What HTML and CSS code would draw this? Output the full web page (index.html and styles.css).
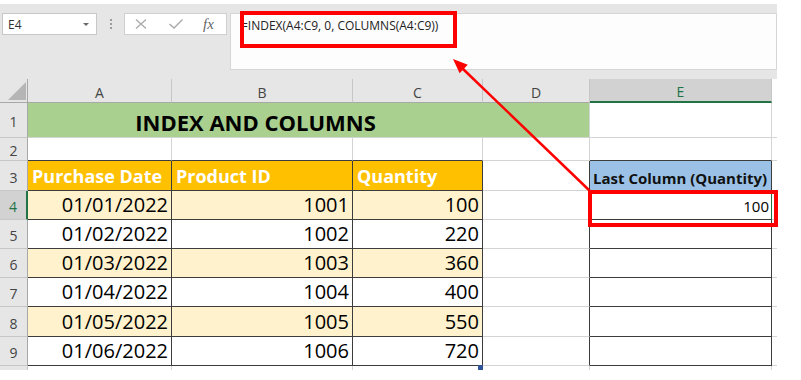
FILE: index.html
```html
<!DOCTYPE html>
<html lang="en">
<head>
    <meta charset="UTF-8">
    <title>INDEX and COLUMNS</title>
    <link rel="stylesheet" href="styles.css">
</head>
<body>
    <div class="app">
        <div class="toolbar">
            <div class="namebox"><span>E4</span><i class="caret"></i></div>
            <div class="grip"><i></i><i></i><i></i></div>
            <div class="fbtns">
                <svg width="12" height="10" viewBox="0 0 12 10"><path d="M1 0.5 L11 9.5 M11 0.5 L1 9.5" stroke="#a9a9a9" stroke-width="1.3" fill="none"/></svg>
                <svg width="14" height="10" viewBox="0 0 14 10"><path d="M0.5 5 L5 9 L13.5 0.5" stroke="#a9a9a9" stroke-width="1.4" fill="none"/></svg>
                <span class="fx">fx</span>
            </div>
            <div class="formula">=INDEX(A4:C9, 0, COLUMNS(A4:C9))</div>
        </div>

        <div class="sheet">
            <!-- column headers -->
            <div class="corner"><svg width="18" height="18" viewBox="0 0 18 18"><polygon points="18,0 18,18 0,18" fill="#b5b5b5"/></svg></div>
            <div class="ch">A</div>
            <div class="ch">B</div>
            <div class="ch">C</div>
            <div class="ch">D</div>
            <div class="ch on">E</div>
            <div class="gap"></div>

            <!-- row 1 -->
            <div class="rh">1</div>
            <div class="cell title">INDEX AND COLUMNS</div>
            <div class="cell green"></div>
            <div class="cell"></div>
            <div class="stub"></div>

            <!-- row 2 -->
            <div class="rh">2</div>
            <div class="cell kb"></div>
            <div class="cell kb"></div>
            <div class="cell kb"></div>
            <div class="cell"></div>
            <div class="cell kb"></div>
            <div class="stub"></div>

            <!-- row 3 -->
            <div class="rh">3</div>
            <div class="cell k head">Purchase Date</div>
            <div class="cell k head">Product ID</div>
            <div class="cell k head">Quantity</div>
            <div class="cell kr"></div>
            <div class="cell k label">Last Column (Quantity)</div>
            <div class="stub"></div>

            <!-- row 4 -->
            <div class="rh on">4</div>
            <div class="cell k val odd">01/01/2022</div>
            <div class="cell k val odd">1001</div>
            <div class="cell k val odd">100</div>
            <div class="cell kr"></div>
            <div class="cell k res pick">100</div>
            <div class="stub"></div>

            <!-- row 5 -->
            <div class="rh">5</div>
            <div class="cell k val">01/02/2022</div>
            <div class="cell k val">1002</div>
            <div class="cell k val">220</div>
            <div class="cell kr"></div>
            <div class="cell k"></div>
            <div class="stub"></div>

            <!-- row 6 -->
            <div class="rh">6</div>
            <div class="cell k val odd">01/03/2022</div>
            <div class="cell k val odd">1003</div>
            <div class="cell k val odd">360</div>
            <div class="cell kr"></div>
            <div class="cell k"></div>
            <div class="stub"></div>

            <!-- row 7 -->
            <div class="rh">7</div>
            <div class="cell k val">01/04/2022</div>
            <div class="cell k val">1004</div>
            <div class="cell k val">400</div>
            <div class="cell kr"></div>
            <div class="cell k"></div>
            <div class="stub"></div>

            <!-- row 8 -->
            <div class="rh">8</div>
            <div class="cell k val odd">01/05/2022</div>
            <div class="cell k val odd">1005</div>
            <div class="cell k val odd">550</div>
            <div class="cell kr"></div>
            <div class="cell k"></div>
            <div class="stub"></div>

            <!-- row 9 -->
            <div class="rh">9</div>
            <div class="cell k val">01/06/2022</div>
            <div class="cell k val">1006</div>
            <div class="cell k val">720</div>
            <div class="cell kr"></div>
            <div class="cell k"></div>
            <div class="stub"></div>

            <!-- cut-off row 10 -->
            <div class="tail rh-tail"></div>
            <div class="tail"></div>
            <div class="tail"></div>
            <div class="tail"></div>
            <div class="tail"></div>
            <div class="tail"></div>
            <div class="tail end"></div>
        </div>

        <!-- annotations drawn over the sheet -->
        <svg class="marks" width="801" height="380" viewBox="0 0 801 380">
            <rect x="242" y="9" width="213" height="33" fill="none" stroke="#ff0000" stroke-width="4"/>
            <rect x="590" y="188" width="186" height="33" fill="none" stroke="#ff0000" stroke-width="4"/>
            <line x1="462" y1="64" x2="591" y2="188" stroke="#ff0000" stroke-width="2.5"/>
            <polygon points="453,55 459.6,69.3 467.8,60.7" fill="#ff0000"/>
            <rect x="478" y="361" width="5" height="5" fill="#2f5597"/>
        </svg>
    </div>
</body>
</html>
```

FILE: styles.css
```css
* {
    margin: 0;
    padding: 0;
    box-sizing: border-box;
}

body {
    background: #fff;
    font-family: "Open Sans", sans-serif;
    color: #000;
}

.app {
    position: relative;
    width: 777px;
}

/* formula bar */
.toolbar {
    margin-top: 4px;
    height: 75px;
    background: #e6e6e6;
    display: flex;
    align-items: flex-start;
    padding: 9px 0 0 2px;
}

.namebox {
    width: 95px;
    height: 22px;
    background: #fff;
    border: 1px solid #c8c8c8;
    display: flex;
    align-items: center;
    justify-content: space-between;
    padding: 0 7px 0 5px;
    font-size: 12px;
    color: #333;
}

.caret {
    width: 0;
    height: 0;
    border-left: 3px solid transparent;
    border-right: 3px solid transparent;
    border-top: 3px solid #6a6a6a;
}

.grip {
    margin: 6px 0 0 13px;
    display: flex;
    flex-direction: column;
    gap: 2px;
}

.grip i {
    width: 2px;
    height: 2px;
    background: #9c9c9c;
}

.fbtns {
    margin-left: 12px;
    width: 103px;
    height: 22px;
    background: #fff;
    border: 1px solid #d0d0d0;
    display: flex;
    align-items: center;
    gap: 22px;
    padding-left: 10px;
}

.fx {
    margin-left: -2px;
    font-family: "Liberation Serif", serif;
    font-style: italic;
    font-size: 15px;
    color: #666;
    line-height: 1;
}

.formula {
    margin-left: 3px;
    flex: 1;
    height: 57px;
    background: #fdfdfd;
    border: 1px solid #d6d6d6;
    padding: 4px 0 0 10px;
    font-size: 12px;
    line-height: 16px;
    color: #222;
}

/* worksheet grid */
.sheet {
    display: grid;
    grid-template-columns: 28px 144px 181px 130px 107px 182px 5px;
    grid-template-rows: 24px 35px 23px 30px 29px 29px 29px 29px 30px 29px 4px;
}

.corner {
    background: #e6e6e6;
    border-right: 1px solid #a8a8a8;
    border-bottom: 1px solid #a8a8a8;
    display: flex;
    align-items: flex-end;
    justify-content: flex-end;
    padding: 0 1px 2px 0;
}

.ch {
    background: #e6e6e6;
    border-right: 1px solid #c6c6c6;
    border-bottom: 1px solid #a8a8a8;
    display: flex;
    align-items: center;
    justify-content: center;
    padding-top: 3px;
    font-size: 14px;
    color: #444;
}

.ch.on {
    background: #d2d2d2;
    border-bottom: 2px solid #217346;
    color: #217346;
}

.gap {
    background: #fff;
}

.rh {
    background: #e6e6e6;
    border-right: 1px solid #a8a8a8;
    border-bottom: 1px solid #c6c6c6;
    display: flex;
    align-items: center;
    justify-content: center;
    padding-top: 3px;
    font-size: 14px;
    color: #444;
}

.rh.on {
    background: #d2d2d2;
    border-right: 2px solid #217346;
    color: #217346;
}

.cell {
    border-right: 1px solid #d4d4d4;
    border-bottom: 1px solid #d4d4d4;
    display: flex;
    align-items: flex-end;
    white-space: nowrap;
    overflow: hidden;
}

.stub {
    border-bottom: 1px solid #d4d4d4;
}

.tail {
    border-right: 1px solid #d4d4d4;
}

.tail.rh-tail {
    background: #e6e6e6;
    border-right-color: #c6c6c6;
}

.tail.end {
    border-right: none;
}

/* black cell borders of the two tables */
.k {
    border-right-color: #3c3c3c;
    border-bottom-color: #3c3c3c;
}

.kb {
    border-bottom-color: #3c3c3c;
}

.kr {
    border-right-color: #3c3c3c;
}

.title {
    grid-column: span 3;
    background: #a9d08e;
    border-right: none;
    justify-content: center;
    padding-bottom: 2px;
    font-size: 22px;
    line-height: 26px;
    font-weight: bold;
}

.green {
    background: #a9d08e;
}

.head {
    background: #ffc000;
    color: #fff;
    font-size: 18px;
    line-height: 22px;
    font-weight: bold;
    padding: 0 0 3px 4px;
}

.label {
    background: #9bc2e6;
    color: #111;
    font-size: 15px;
    line-height: 20px;
    font-weight: bold;
    padding: 0 0 2px 3px;
}

.val {
    justify-content: flex-end;
    font-size: 20px;
    line-height: 24px;
    padding: 0 3px 2px 0;
}

.val.odd {
    background: #fff2cc;
}

.res {
    justify-content: flex-end;
    font-size: 15px;
    line-height: 20px;
    padding: 0 2px 3px 0;
}

.pick {
    border-right-color: #217346;
}

.marks {
    position: absolute;
    top: 0;
    left: 0;
    pointer-events: none;
}
```
